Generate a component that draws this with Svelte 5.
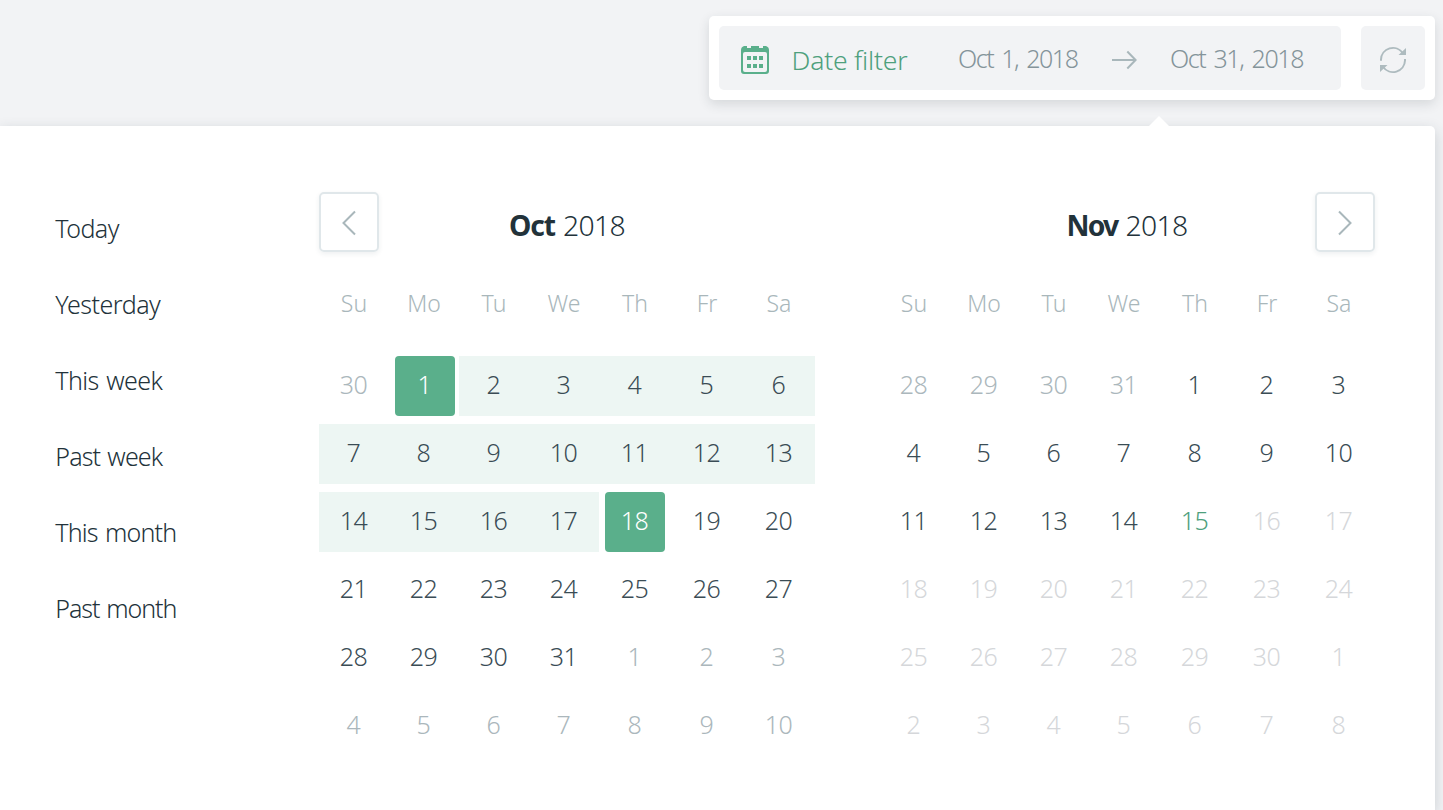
<script>
  const presets = [
    ['Today', 63.5], ['Yesterday', 105], ['This week', 107],
    ['Past week', 107], ['This month', 121], ['Past month', 121],
  ];
  const weekdays = ['Su', 'Mo', 'Tu', 'We', 'Th', 'Fr', 'Sa'];

  function grid(start, previousLength, length) {
    return Array.from({ length: 42 }, (_, i) => {
      const n = i - start + 1;
      if (n < 1) return { day: previousLength + n, outside: true, index: n };
      if (n > length) return { day: n - length, outside: true, index: n };
      return { day: n, outside: false, index: n };
    });
  }

  const october = grid(1, 30, 31).map((d) => ({
    ...d,
    kind: d.outside ? 'outside' : d.day === 1 ? 'selected first' : d.day === 18 ? 'selected' : d.day < 18 ? 'range' : '',
  }));
  const november = grid(4, 31, 30).map((d) => ({
    ...d,
    kind: d.index > 15 ? 'disabled' : d.index === 15 ? 'today' : d.outside ? 'outside' : '',
  }));
  const months = [
    { name: 'Oct', year: 2018, days: october },
    { name: 'Nov', year: 2018, days: november },
  ];

  // Spreads a label over its intended width by adjusting the tracking.
  function fit(node, width) {
    node.style.letterSpacing = '0px';
    const extra = (width - node.getBoundingClientRect().width) / node.textContent.length;
    node.style.letterSpacing = `${extra.toFixed(3)}px`;
  }
</script>

<div class="page">
  <header>
    <div class="toolbar">
      <div class="filter">
        <svg class="calendar" width="28" height="28" viewBox="0 0 28 28">
          <path fill="#5aaf8b" fill-rule="evenodd" d="M3 0H6V2H10V0H18V2H22V0H25Q28 1 28 4V25Q28 28 25 28H3Q0 28 0 25V4Q0 1 3 0ZM2 8V24Q2 26 4 26H24Q26 26 26 24V8Q26 6 24 6H4Q2 6 2 8Z" />
          <path fill="#5aaf8b" d="M6 10h4v4H6zM12 10h4v4h-4zM18 10h4v4h-4zM6 18h4v4H6zM12 18h4v4h-4zM18 18h4v4h-4z" />
        </svg>
        <div class="label"><span use:fit={116}>Date filter</span></div>
        <div class="date from"><span use:fit={119.5}>Oct 1, 2018</span></div>
        <svg class="arrow" width="26" height="20" viewBox="0 0 26 20" fill="none" stroke="#a9b7bb" stroke-width="2">
          <path d="M0 10H24M15.3 1.5L23.6 10L15.3 18.5" />
        </svg>
        <div class="date to"><span use:fit={133}>Oct 31, 2018</span></div>
      </div>
      <div class="refresh">
        <svg width="28" height="28" viewBox="0 0 28 28">
          <path d="M2 14.7V13.5A12 12 0 0 1 23.8 7M26 13V14.5A12 12 0 0 1 4.2 21" fill="none" stroke="#aebbbf" stroke-width="2" />
          <path d="M27 2V9H19.5ZM1 26V19H8.5Z" fill="#aebbbf" />
        </svg>
      </div>
    </div>
  </header>

  <main>
    <i class="pointer"></i>
    <nav>
      {#each presets as [name, width]}
        <div><span use:fit={width}>{name}</span></div>
      {/each}
    </nav>
    <div class="months">
      {#each months as month, m}
        <section>
          <div class="head">
            {#if m === 0}
              <div class="step"><svg width="16" height="26" viewBox="0 0 16 26"><path d="M14 1.5L2.5 13L14 24.5" /></svg></div>
            {/if}
            <h2 class:second={m === 1}><b use:fit={m === 0 ? 46 : 51}>{month.name}</b><span use:fit={62}>{month.year}</span></h2>
            {#if m === 1}
              <div class="step"><svg width="16" height="26" viewBox="0 0 16 26"><path d="M2 1.5L13.5 13L2 24.5" /></svg></div>
            {/if}
          </div>
          <div class="weekdays">
            {#each weekdays as w}<div>{w}</div>{/each}
          </div>
          <div class="days">
            {#each month.days as d}
              <div class="day {d.kind}"><span>{d.day}</span></div>
            {/each}
          </div>
        </section>
      {/each}
    </div>
  </main>
</div>

<style>
  :global(body) { margin: 0; }
  .page {
    height: 810px;
    overflow: hidden;
    display: flex;
    flex-direction: column;
    background: #f2f3f5;
    color: #22323a;
    font-family: "Noto Sans", sans-serif;
    font-weight: 330;
    font-size: 25px;
    white-space: nowrap;
  }
  header {
    height: 110px;
    padding: 16px 8px 0 0;
    display: flex;
    justify-content: flex-end;
    align-items: flex-start;
  }
  .toolbar {
    display: flex;
    gap: 20px;
    padding: 10px;
    background: #fff;
    border-radius: 5px;
    box-shadow: 0 4px 12px rgba(38, 50, 60, .14);
  }
  .filter, .refresh {
    height: 64px;
    display: flex;
    align-items: center;
    background: #f2f3f5;
    border-radius: 5px;
  }
  .filter { width: 622px; }
  .refresh { width: 64px; justify-content: center; }
  .refresh svg { margin-top: 4px; }
  .calendar { margin: 4px 0 0 22px; }
  .label {
    width: 166px;
    margin-left: 22.5px;
    padding-top: 3px;
    color: #4ea07d;
    font-size: 26.5px;
  }
  .date { color: #84949a; word-spacing: 3px; }
  .from { width: 154px; padding-left: .5px; }
  .arrow { margin-top: 4px; margin-right: 32px; }
  main {
    position: relative;
    flex: 1;
    width: 1435px;
    display: flex;
    background: #fff;
    border-radius: 0 5px 0 0;
    box-shadow: 0 4px 14px rgba(38, 60, 75, .2);
  }
  .pointer {
    position: absolute;
    left: 1149px;
    top: -10px;
    width: 20px;
    height: 10px;
    background: #fff;
    clip-path: polygon(50% 0, 100% 100%, 0 100%);
  }
  nav { box-sizing: border-box; width: 319px; padding: 64px 0 0 55.3px; word-spacing: 1.5px; }
  nav div { height: 76px; line-height: 76px; }
  .months { display: flex; gap: 64px; padding-top: 66px; }
  section { width: 496px; }
  .head { height: 60px; display: flex; }
  .step {
    box-sizing: border-box;
    width: 60px;
    height: 60px;
    border: 2px solid #e0e7ea;
    border-radius: 5px;
    box-shadow: 0 2px 5px rgba(38, 60, 75, .08);
    display: flex;
    align-items: center;
    justify-content: center;
  }
  .step svg { margin-top: 2px; fill: none; stroke: #a9b7bb; stroke-width: 2; }
  h2 {
    flex: 1;
    margin: 0;
    padding-right: 60px;
    display: flex;
    justify-content: center;
    gap: 8px;
    font-size: 28.3px;
    line-height: 66px;
    font-weight: inherit;
  }
  h2.second { padding: 0 0 0 60px; }
  h2 b { font-weight: 700; }
  .weekdays, .days {
    display: grid;
    grid-template-columns: repeat(4, 70px) repeat(3, 72px);
  }
  .weekdays {
    margin-top: 31px;
    line-height: 40px;
    text-align: center;
    color: #a9b7bb;
    font-size: 23px;
  }
  .days { margin-top: 33px; row-gap: 8px; }
  .day {
    height: 60px;
    display: flex;
    align-items: center;
    justify-content: center;
    color: #3a4c55;
  }
  .day span { padding-bottom: 4px; padding-right: .8px; letter-spacing: -.3px; }
  .range { background: #edf6f3; }
  .outside { color: #abb7bc; }
  .disabled { color: #d5d7da; }
  .today { color: #4ea07d; }
  .selected span {
    box-sizing: border-box;
    width: 60px;
    height: 60px;
    line-height: 56px;
    text-align: center;
    background: #5aaf8b;
    border-radius: 4px;
    color: #fff;
  }
  .first { padding-left: 2px; box-sizing: border-box; }
</style>
